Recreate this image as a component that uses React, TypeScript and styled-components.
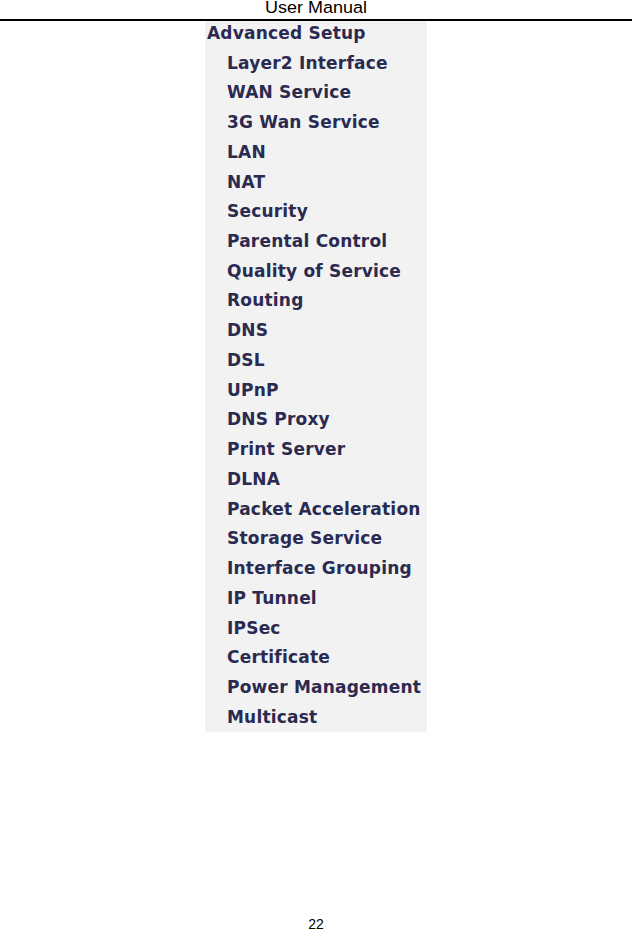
import React from "react";
import styled, { createGlobalStyle } from "styled-components";

const Global = createGlobalStyle`
  html, body { margin: 0; padding: 0; background: #ffffff; }
  body { width: 632px; height: 932px; overflow: hidden; }
`;

const Page = styled.div`
  width: 632px;
  height: 932px;
  display: flex;
  flex-direction: column;
  align-items: center;
  font-family: "Liberation Sans", Arial, sans-serif;
`;

const Header = styled.div`
  align-self: stretch;
  display: flex;
  flex-direction: column;
  align-items: center;
`;

const HeaderTitle = styled.div`
  font-size: 18px;
  line-height: 17px;
  height: 19px;
  color: #000;
  transform: scaleY(0.92);
  transform-origin: top;
`;

const Rule = styled.div`
  align-self: stretch;
  height: 2px;
  background: #000;
`;

const Panel = styled.nav`
  width: 222px;
  height: 711px;
  background: #f2f2f2;
  overflow: hidden;
  display: flex;
  flex-direction: column;
  font-family: "DejaVu Sans", Verdana, sans-serif;
  font-weight: bold;
  color: #2b2a50;
`;

const List = styled.div`
  margin-top: -3px;
  display: flex;
  flex-direction: column;
`;

const Item = styled.div<{ $level: number }>`
  height: 29.74px;
  display: flex;
  align-items: center;
  padding-left: ${(p) => (p.$level === 0 ? 2 : 22)}px;
  font-size: 17px;
  letter-spacing: 0.2px;
  white-space: nowrap;
`;

const Spacer = styled.div`
  flex: 1;
`;

const PageNum = styled.div`
  font-size: 14px;
  line-height: 15px;
  color: #000;
  height: 15px;
`;

const items = [
  "Layer2 Interface",
  "WAN Service",
  "3G Wan Service",
  "LAN",
  "NAT",
  "Security",
  "Parental Control",
  "Quality of Service",
  "Routing",
  "DNS",
  "DSL",
  "UPnP",
  "DNS Proxy",
  "Print Server",
  "DLNA",
  "Packet Acceleration",
  "Storage Service",
  "Interface Grouping",
  "IP Tunnel",
  "IPSec",
  "Certificate",
  "Power Management",
  "Multicast",
];

export default function App() {
  return (
    <>
      <Global />
      <Page>
        <Header>
          <HeaderTitle>User Manual</HeaderTitle>
          <Rule />
        </Header>
        <Panel>
          <List>
            <Item $level={0}>Advanced Setup</Item>
            {items.map((t) => (
              <Item key={t} $level={1}>
                {t}
              </Item>
            ))}
          </List>
        </Panel>
        <Spacer />
        <PageNum>22</PageNum>
      </Page>
    </>
  );
}
